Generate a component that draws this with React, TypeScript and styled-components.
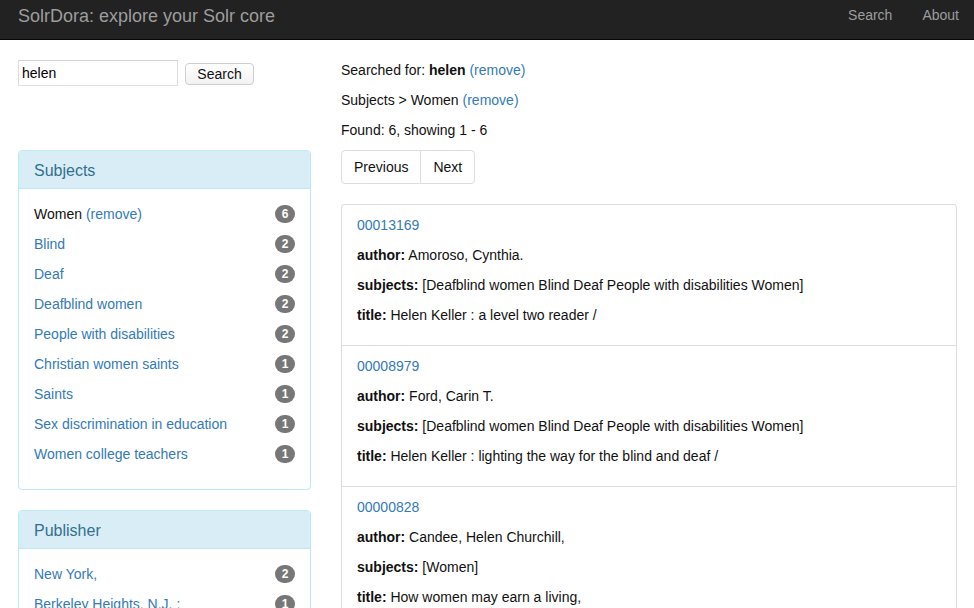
import React from "react";
import styled, { createGlobalStyle } from "styled-components";

const Global = createGlobalStyle`
  html, body { margin: 0; padding: 0; }
  body {
    font-family: "Liberation Sans", Arial, Helvetica, sans-serif;
    font-size: 14px;
    line-height: 20px;
    color: #333;
    background: #fff;
  }
  * { box-sizing: border-box; }
`;

const Navbar = styled.nav`
  height: 40px;
  background: #222;
  border-bottom: 1px solid #080808;
  display: flex;
  align-items: flex-start;
  justify-content: space-between;
  padding: 0 0 0 3px;
`;

const Brand = styled.a`
  color: #9d9d9d;
  font-size: 18px;
  line-height: 20px;
  padding: 6px 15px 0;
  text-decoration: none;
`;

const NavLinks = styled.div`
  display: flex;
  padding-top: 5px;
`;

const NavLink = styled.a`
  color: #9d9d9d;
  font-size: 14px;
  line-height: 20px;
  padding: 0 15px;
  text-decoration: none;
`;

const Container = styled.div`
  display: grid;
  grid-template-columns: 323px 646px;
  padding: 20px 0 0 3px;
`;

const Col = styled.div`
  padding: 0 15px;
`;

const SearchForm = styled.form`
  display: flex;
  align-items: center;
  gap: 7px;
  margin-bottom: 64px;
`;

const SearchInput = styled.input`
  width: 160px;
  height: 26px;
  border: 1px solid #ccc;
  border-color: #d4d4d4 #ddd #e2e2e2 #ddd;
  padding: 1px 3px;
  font-family: "Liberation Sans", Arial, sans-serif;
  font-size: 14px;
  color: #000;
  outline: none;
`;

const SearchButton = styled.button`
  height: 22px;
  width: 69px;
  border: 1px solid #cfcfcf;
  border-radius: 4px;
  background: linear-gradient(#fff, #f2f2f2);
  font-family: "Liberation Sans", Arial, sans-serif;
  font-size: 14px;
  color: #111;
  padding: 0;
  margin-top: 2px;
`;

const Panel = styled.div<{ $variant?: "info" | "default" }>`
  border: 1px solid ${(p) => (p.$variant === "info" ? "#bce8f1" : "#ddd")};
  border-radius: 4px;
  margin-bottom: 20px;
  background: #fff;
  overflow: hidden;
`;

const PanelHeading = styled.div`
  background: #d9edf7;
  border-bottom: 1px solid #bce8f1;
  color: #31708f;
  padding: 1px 15px 0;
  font-size: 16px;
  line-height: 17px;
  height: 38px;
  display: flex;
  align-items: center;
`;

const PanelBody = styled.ul`
  list-style: none;
  margin: 0;
  padding: 15px;
`;

const FacetItem = styled.li`
  display: flex;
  justify-content: space-between;
  align-items: center;
  height: 20px;
  margin-bottom: 10px;
`;

const Link = styled.a`
  color: #337ab7;
  text-decoration: none;
`;

const Plain = styled.span`
  color: #111;
`;

const Badge = styled.span`
  display: inline-block;
  min-width: 20px;
  height: 18px;
  padding: 0 6px;
  border-radius: 10px;
  background: #777;
  color: #fff;
  font-size: 12px;
  font-weight: bold;
  line-height: 18px;
  text-align: center;
`;

const Para = styled.p`
  margin: 0 0 10px;
  color: #111;
`;

const Pagination = styled.div`
  display: inline-flex;
  margin-bottom: 20px;
`;

const PageLink = styled.a<{ $first?: boolean; $last?: boolean }>`
  display: block;
  padding: 6px 12px;
  line-height: 20px;
  border: 1px solid #ddd;
  margin-left: ${(p) => (p.$first ? "0" : "-1px")};
  border-radius: ${(p) =>
    p.$first ? "4px 0 0 4px" : p.$last ? "0 4px 4px 0" : "0"};
  color: #111;
  background: #fff;
  text-decoration: none;
`;

const ResultList = styled.div`
  border: 1px solid #ddd;
  border-bottom: none;
  border-radius: 4px 4px 0 0;
`;

const ResultItem = styled.div`
  padding: 10px 15px;
  border-bottom: 1px solid #ddd;
`;

const Label = styled.b`
  color: #111;
`;

const facets: { name: string; count: number; selected?: boolean }[] = [
  { name: "Women", count: 6, selected: true },
  { name: "Blind", count: 2 },
  { name: "Deaf", count: 2 },
  { name: "Deafblind women", count: 2 },
  { name: "People with disabilities", count: 2 },
  { name: "Christian women saints", count: 1 },
  { name: "Saints", count: 1 },
  { name: "Sex discrimination in education", count: 1 },
  { name: "Women college teachers", count: 1 },
];

const publishers = [
  { name: "New York,", count: 2 },
  { name: "Berkeley Heights, N.J. :", count: 1 },
];

const results = [
  {
    id: "00013169",
    author: "Amoroso, Cynthia.",
    subjects: "[Deafblind women Blind Deaf People with disabilities Women]",
    title: "Helen Keller : a level two reader /",
  },
  {
    id: "00008979",
    author: "Ford, Carin T.",
    subjects: "[Deafblind women Blind Deaf People with disabilities Women]",
    title: "Helen Keller : lighting the way for the blind and deaf /",
  },
  {
    id: "00000828",
    author: "Candee, Helen Churchill,",
    subjects: "[Women]",
    title: "How women may earn a living,",
  },
];

export default function App() {
  return (
    <>
      <Global />
      <Navbar>
        <Brand href="#">SolrDora: explore your Solr core</Brand>
        <NavLinks>
          <NavLink href="#">Search</NavLink>
          <NavLink href="#">About</NavLink>
        </NavLinks>
      </Navbar>
      <Container>
        <Col>
          <SearchForm onSubmit={(e) => e.preventDefault()}>
            <SearchInput defaultValue="helen" />
            <SearchButton type="submit">Search</SearchButton>
          </SearchForm>
          <Panel $variant="info">
            <PanelHeading>Subjects</PanelHeading>
            <PanelBody>
              {facets.map((f) => (
                <FacetItem key={f.name}>
                  {f.selected ? (
                    <span>
                      <Plain>{f.name}</Plain> <Link href="#">(remove)</Link>
                    </span>
                  ) : (
                    <Link href="#">{f.name}</Link>
                  )}
                  <Badge>{f.count}</Badge>
                </FacetItem>
              ))}
            </PanelBody>
          </Panel>
          <Panel $variant="info">
            <PanelHeading>Publisher</PanelHeading>
            <PanelBody>
              {publishers.map((f) => (
                <FacetItem key={f.name}>
                  <Link href="#">{f.name}</Link>
                  <Badge>{f.count}</Badge>
                </FacetItem>
              ))}
            </PanelBody>
          </Panel>
        </Col>
        <Col>
          <Para>
            Searched for: <b>helen</b> <Link href="#">(remove)</Link>
          </Para>
          <Para>
            Subjects &gt; Women <Link href="#">(remove)</Link>
          </Para>
          <Para>Found: 6, showing 1 - 6</Para>
          <Pagination>
            <PageLink href="#" $first>
              Previous
            </PageLink>
            <PageLink href="#" $last>
              Next
            </PageLink>
          </Pagination>
          <ResultList>
            {results.map((r) => (
              <ResultItem key={r.id}>
                <Para>
                  <Link href="#">{r.id}</Link>
                </Para>
                <Para>
                  <Label>author:</Label> {r.author}
                </Para>
                <Para>
                  <Label>subjects:</Label> {r.subjects}
                </Para>
                <Para>
                  <Label>title:</Label> {r.title}
                </Para>
              </ResultItem>
            ))}
          </ResultList>
        </Col>
      </Container>
    </>
  );
}
